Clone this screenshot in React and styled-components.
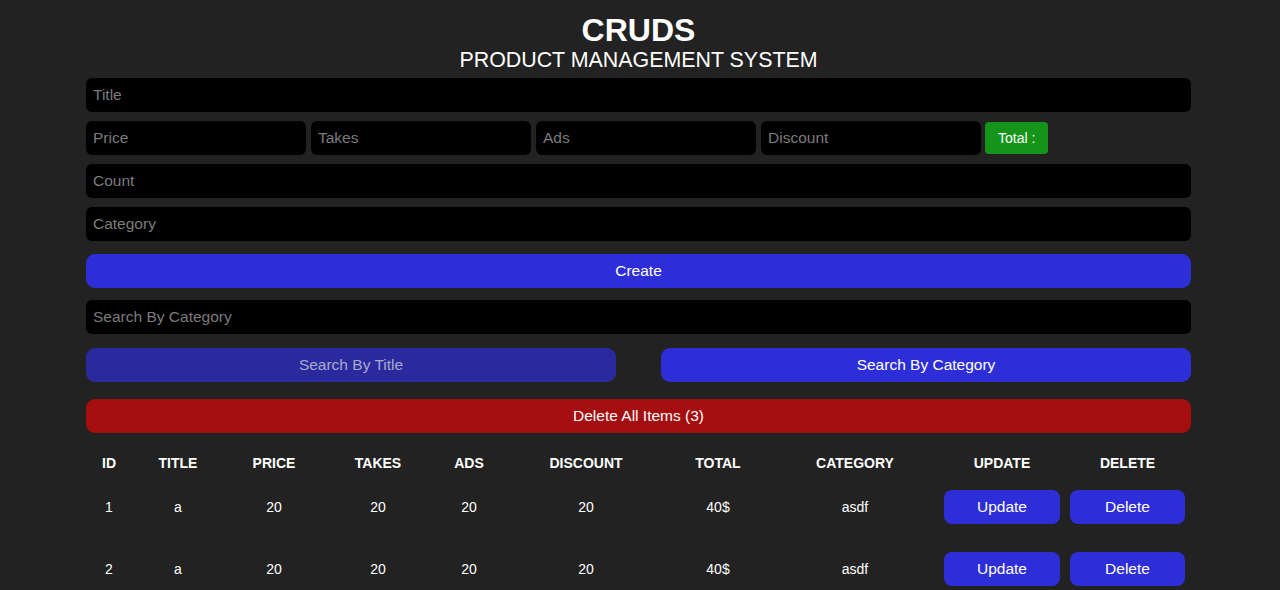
import React from "react";
import styled, { createGlobalStyle } from "styled-components";

const Global = createGlobalStyle`
  html, body { margin: 0; padding: 0; background: #222222; }
  body { font-family: "Liberation Sans", Arial, sans-serif; color: #fff; overflow: hidden; }
`;

const Page = styled.div`
  width: 1105px;
  padding-right: 3px;
  margin: 0 auto;
  display: flex;
  flex-direction: column;
`;

const Head = styled.header`
  text-align: center;
  padding-top: 12px;
`;

const Title = styled.h1`
  margin: 0;
  font-size: 32px;
  line-height: 37px;
  font-weight: 700;
`;

const Sub = styled.p`
  margin: 0;
  font-size: 21.4px;
  line-height: 23px;
`;

const Input = styled.input`
  box-sizing: border-box;
  width: 100%;
  height: 34px;
  margin-top: ${(p) => p.$mt || 9}px;
  padding: 0 7px;
  border: none;
  outline: none;
  border-radius: 6px;
  background: #000;
  color: #fff;
  font-family: "Liberation Sans", Arial, sans-serif;
  font-size: 15.5px;
  &::placeholder { color: #7b7b7b; }
`;

const PriceRow = styled.div`
  display: flex;
  align-items: center;
  gap: 5px;
  margin-top: 9px;
`;

const SmallInput = styled(Input)`
  width: 220px;
  margin-top: 0;
`;

const TotalBadge = styled.small`
  margin-left: -1px;
  height: 32px;
  padding: 0 13px;
  display: flex;
  align-items: center;
  background: #15941a;
  border-radius: 4px;
  font-size: 14px;
  color: #fff;
`;

const Button = styled.button`
  box-sizing: border-box;
  width: 100%;
  height: 34px;
  margin-top: ${(p) => p.$mt || 0}px;
  border: none;
  border-radius: 9px;
  background: ${(p) => p.$bg || "#2e2ed8"};
  color: ${(p) => p.$fg || "#fff"};
  font-family: "Liberation Sans", Arial, sans-serif;
  font-size: 15.5px;
  cursor: pointer;
`;

const SearchRow = styled.div`
  display: grid;
  grid-template-columns: 530px 530px;
  justify-content: space-between;
  margin-top: 14px;
`;

const Table = styled.table`
  width: 100%;
  margin-top: 17px;
  border-collapse: collapse;
  table-layout: fixed;
  text-align: center;
`;

const Th = styled.th`
  height: 26px;
  padding: 0;
  font-size: 14px;
  font-weight: 700;
  text-transform: uppercase;
  vertical-align: middle;
`;

const Td = styled.td`
  height: 62px;
  padding: 0 ${(p) => p.$px || 0}px;
  font-size: 14px;
  vertical-align: middle;
`;

const RowButton = styled(Button)`
  border-radius: 8px;
`;

const cols = [46, 92, 100, 108, 74, 160, 104, 170, 124, 127];
const heads = ["id", "title", "price", "takes", "ads", "discount", "total", "category", "update", "delete"];
const rows = [
  { id: 1, title: "a", price: 20, takes: 20, ads: 20, discount: 20, total: "40$", category: "asdf" },
  { id: 2, title: "a", price: 20, takes: 20, ads: 20, discount: 20, total: "40$", category: "asdf" },
];

export default function App() {
  return (
    <>
      <Global />
      <Page>
        <Head>
          <Title>CRUDS</Title>
          <Sub>PRODUCT MANAGEMENT SYSTEM</Sub>
        </Head>
        <Input $mt={6} placeholder="Title" />
        <PriceRow>
          <SmallInput placeholder="Price" />
          <SmallInput placeholder="Takes" />
          <SmallInput placeholder="Ads" />
          <SmallInput placeholder="Discount" />
          <TotalBadge>Total :</TotalBadge>
        </PriceRow>
        <Input placeholder="Count" />
        <Input placeholder="Category" />
        <Button $mt={13}>Create</Button>
        <Input $mt={12} placeholder="Search By Category" />
        <SearchRow>
          <Button $bg="#2a2a9e" $fg="#a9a9c9">Search By Title</Button>
          <Button>Search By Category</Button>
        </SearchRow>
        <Button $mt={17} $bg="#a50e0e">Delete All Items (3)</Button>
        <Table>
          <colgroup>
            {cols.map((w, i) => (
              <col key={i} style={{ width: w }} />
            ))}
          </colgroup>
          <thead>
            <tr>
              {heads.map((h) => (
                <Th key={h}>{h}</Th>
              ))}
            </tr>
          </thead>
          <tbody>
            {rows.map((r) => (
              <tr key={r.id}>
                <Td>{r.id}</Td>
                <Td>{r.title}</Td>
                <Td>{r.price}</Td>
                <Td>{r.takes}</Td>
                <Td>{r.ads}</Td>
                <Td>{r.discount}</Td>
                <Td>{r.total}</Td>
                <Td>{r.category}</Td>
                <Td $px={4}>
                  <RowButton>Update</RowButton>
                </Td>
                <Td $px={6}>
                  <RowButton>Delete</RowButton>
                </Td>
              </tr>
            ))}
          </tbody>
        </Table>
      </Page>
    </>
  );
}
